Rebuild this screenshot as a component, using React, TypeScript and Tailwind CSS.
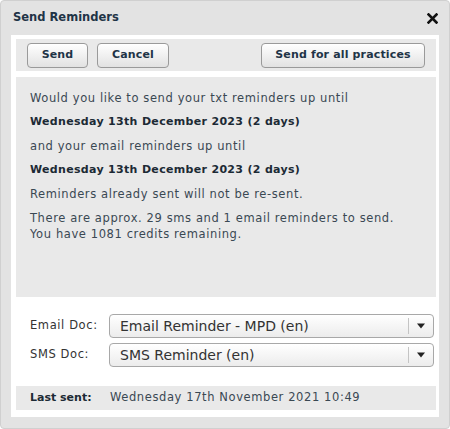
export default function App() {
  const btn =
    'h-[25px] rounded-[4px] border border-[#9a9a9a] bg-gradient-to-b from-[#ffffff] to-[#e2e2e2] text-[11px] font-bold tracking-[0.15px] text-[#1f3447] shadow-[inset_0_1px_0_#fff]';
  const bold = 'font-bold text-[11px] tracking-[0.32px] text-[#1c2a35]';

  return (
    <div className="w-[450px] h-[429px] bg-[#e3e3e3] border border-[#d0d0d0] rounded-[4px] font-['DejaVu_Sans',Verdana,sans-serif] text-[11.5px] tracking-[0.6px] text-[#3a4853] flex flex-col">
      <div className="h-[34px] flex items-center justify-between pl-[12px] pr-[11px] shrink-0">
        <span className="text-[11.5px] tracking-normal font-bold text-[#1f3447]">Send Reminders</span>
        <svg width="11" height="11" viewBox="0 0 11 11">
          <path d="M1.5 1.5 L9.5 9.5 M9.5 1.5 L1.5 9.5" stroke="#111" strokeWidth="2.6" strokeLinecap="square" />
        </svg>
      </div>

      <div className="mx-[10px] bg-white pt-[4px] pl-[5px] pr-[3px] pb-[7px] flex flex-col">
        {/* toolbar */}
        <div className="h-[32px] bg-[#e9e9e9] flex items-center pl-[11px] pr-[11px]">
          <button className={`${btn} w-[61px]`}>Send</button>
          <button className={`${btn} w-[72px] ml-[9px]`}>Cancel</button>
          <button className={`${btn} w-[164px] ml-auto`}>Send for all practices</button>
        </div>

        {/* message */}
        <div className="mt-[6px] h-[220px] bg-[#e9e9e9] pl-[14px] pt-[13px] leading-[16px]">
          <p>Would you like to send your txt reminders up until</p>
          <p className={`mt-[8px] ${bold}`}>Wednesday 13th December 2023 (2 days)</p>
          <p className="mt-[8px]">and your email reminders up until</p>
          <p className={`mt-[8px] ${bold}`}>Wednesday 13th December 2023 (2 days)</p>
          <p className="mt-[8px]">Reminders already sent will not be re-sent.</p>
          <p className="mt-[8px]">
            There are approx. 29 sms and 1 email reminders to send.
            <br />
            You have 1081 credits remaining.
          </p>
        </div>

        {/* docs */}
        <div className="mt-[17px] flex flex-col gap-[5px] pl-[14px] pr-[2px]">
          {[
            ['Email Doc:', 'Email Reminder - MPD (en)'],
            ['SMS Doc:', 'SMS Reminder (en)'],
          ].map(([label, value]) => (
            <div key={label} className="flex items-center">
              <span className="w-[79px] text-[#333]">{label}</span>
              <div className="flex-1 h-[24px] rounded-[4px] border border-[#a8a8a8] bg-gradient-to-b from-[#ffffff] to-[#ececec] flex items-center">
                <span className="flex-1 pl-[10px] text-[14px] tracking-normal text-[#333]">{value}</span>
                <span className="w-px h-[16px] bg-[#c4c4c4]" />
                <svg width="24" height="10" viewBox="0 0 24 10">
                  <path d="M8 2.5 L16 2.5 L12 7.5 Z" fill="#222" />
                </svg>
              </div>
            </div>
          ))}
        </div>

        {/* last sent */}
        <div className="mt-[19px] h-[24px] bg-[#e9e9e9] flex items-center pl-[14px]">
          <span className={`w-[80px] ${bold} tracking-normal`}>Last sent:</span>
          <span>Wednesday 17th November 2021 10:49</span>
        </div>
      </div>
    </div>
  );
}
